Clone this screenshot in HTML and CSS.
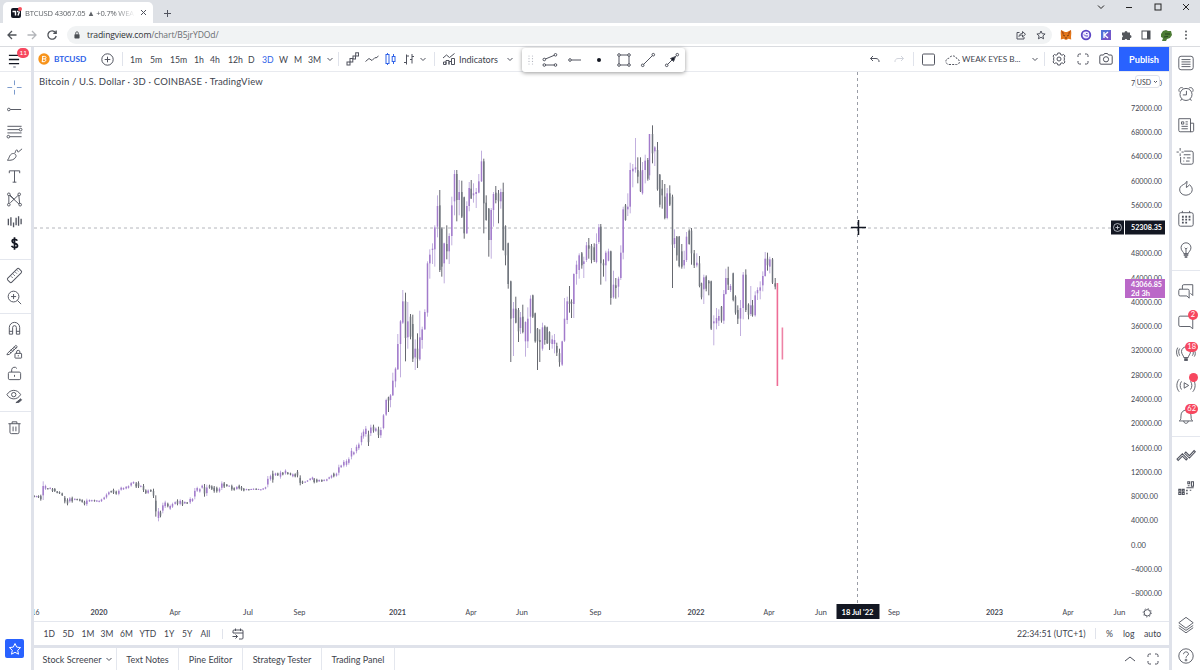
FILE: index.html
```
<!DOCTYPE html>
<html lang="en">
<head>
    <meta charset="UTF-8">
    <meta name="viewport" content="width=device-width, initial-scale=1.0">
    <title>BTCUSD 43067.05 ▲ +0.7% WEAK EYES B...</title>
    <link rel="stylesheet" href="styles.css">
</head>
<body>
    <!-- Browser window -->
    <div class="tab-strip">
        <div class="tab">
            <svg class="favicon" viewBox="0 0 11 11"><rect y="1" width="10" height="10" rx="2" fill="#131722"/><path d="M1.500 4.500h3v4M6 4.500h1.500M8.500 4.500L7 8.500" stroke="#fff" stroke-width="1.400" fill="none"/><circle cx="9" cy="2" r="2" fill="#f7525f"/></svg>
            <span class="tab-title">BTCUSD 43067.05 ▲ +0.7% WEA</span>
            <svg class="tab-close" viewBox="0 0 7 7"><path d="M1 1l5 5M6 1L1 6"/></svg>
        </div>
        <svg class="new-tab" viewBox="0 0 9 9"><path d="M4.500 1v7M1 4.500h7"/></svg>
        <div class="window-buttons">
            <svg viewBox="0 0 8 8"><path d="M1 2.500l3 3 3-3"/></svg>
            <svg viewBox="0 0 8 8"><path d="M1 4.500h6"/></svg>
            <svg viewBox="0 0 8 8"><rect x="1" y="1" width="6" height="6"/></svg>
            <svg viewBox="0 0 8 8"><path d="M1 1l6 6M7 1L1 7"/></svg>
        </div>
    </div>
    <div class="nav-bar">
        <svg class="nav-icon" viewBox="0 0 12 12"><path d="M10.500 6h-8M6 2L2 6l4 4"/></svg>
        <svg class="nav-icon muted" viewBox="0 0 12 12"><path d="M1.500 6h8M6 2l4 4-4 4"/></svg>
        <svg class="nav-icon" viewBox="0 0 12 12"><path d="M9.500 3.500A4.200 4.200 0 1 0 10.200 7M10.200 1.500V4.300H7.300"/></svg>
        <div class="address">
            <svg class="lock" viewBox="0 0 7 9"><rect y="3.500" x=".5" width="6" height="5" rx=".8" fill="#4b4f54"/><path d="M2 4V2.200a1.500 1.500 0 0 1 3 0V4" fill="none" stroke="#4b4f54"/></svg>
            <span>tradingview.com<span class="path">/chart/B5jrYDOd/</span></span>
            <svg class="share" viewBox="0 0 10 10"><path d="M3.500 2.500H1V9h7V7M3 6.500c.3-2 1.500-3 3.500-3V1.500L9.500 4.300 6.500 7V5C5 5 4 5.300 3 6.500z"/></svg>
            <svg class="bookmark" viewBox="0 0 10 10"><path d="M5 1l1.200 2.700 2.900.3-2.200 1.900.7 2.900L5 7.300 2.400 8.800l.7-2.900L.9 4l2.900-.3z"/></svg>
        </div>
        <div class="extensions">
            <svg viewBox="0 0 12 12"><path d="M1 1l4 2h2l4-2 .3 3L11 8l.2 2.500L8 9.800l-1 1H5l-1-1-3.200.7L1 8 .7 4z" fill="#e2761b"/><path d="M3 6l2 1M9 6L7 7M5 9h2" stroke="#763d16"/><path d="M1 1l3 3-1 2zM11 1L8 4l1 2z" fill="#a84a14"/></svg>
            <svg viewBox="0 0 12 12"><circle cx="6" cy="6" r="5.200" fill="#5b45c4"/><circle cx="6" cy="6" r="3.400" fill="#f0ecff"/><path d="M4 5.500l1.500 1.500h2.500M6 4.500h1.500" stroke="#5b45c4" fill="none"/></svg>
            <svg viewBox="0 0 12 12"><rect x="1" y="1" width="10" height="10" fill="#5271d8"/><path d="M1 11L11 1v10z" fill="#7357c9"/><path d="M4 3v6M8 3L4.500 6 8 9" stroke="#fff" stroke-width="1.300" fill="none"/></svg>
            <svg viewBox="0 0 12 12"><path d="M2 3.500h2.500a1.500 1.500 0 1 1 3 0H10V6a1.500 1.500 0 1 1 0 3v2H7.300a1.400 1.400 0 0 0-2.700 0H2V8.500a1.400 1.400 0 0 0 0-2.600z" fill="#54575c"/></svg>
            <svg viewBox="0 0 12 12"><rect x="2" y="2" width="8" height="8" fill="none" stroke="#4b4f54"/><path d="M7 2h3v8H7z" fill="#4b4f54"/></svg>
            <svg viewBox="0 0 12 12"><path d="M1 5l2-3 3-1 2 1 3 0 1 4-2 3-3 1-1 2H2l1-3-2-1z" fill="#4d7c35"/><path d="M5 5h5M4 8l4-.5" stroke="#27451f"/></svg>
            <svg viewBox="0 0 12 12"><g fill="#4b4f54"><circle cx="6" cy="2.500" r=".9"/><circle cx="6" cy="6" r=".9"/><circle cx="6" cy="9.500" r=".9"/></g></svg>
        </div>
    </div>

    <!-- Charting app -->
    <div class="app">
        <div class="drawing-bar">
            <div class="menu">
                <svg viewBox="0 0 14 14"><path d="M1.500 2.500h11M1.500 7h11M1.500 11.500h11" stroke-width="1.400"/></svg>
                <i class="menu-dot"></i>
                <span class="badge menu-badge">11</span>
            </div>
            <div class="tools">
                <svg class="cross-tool" viewBox="0 0 18 18"><path d="M9 1.500v5M9 11.500v5M1.500 9h5M11.500 9h5"/></svg>
                <svg viewBox="0 0 18 18"><circle cx="3" cy="9" r="1.400"/><path d="M4.500 9H16"/></svg>
                <svg viewBox="0 0 18 18"><path d="M1.500 3.500h15M1.500 7h12.500M1.500 10.500h15M4 14.500h12.500"/><circle cx="15.500" cy="7" r="1.400" fill="#fff"/><circle cx="2.500" cy="14.500" r="1.400"/></svg>
                <svg viewBox="0 0 18 18"><path d="M1.500 15c2-1 1.500-6 5.500-7 2.300-.5 4.500 1.500 3.300 3.800C8.700 14.800 5 15.500 1.500 15zM9.500 7.500c.5-2.500 2-4.500 2.500-3s0 2.500 1.500 1.500L17 3"/></svg>
                <svg viewBox="0 0 18 18"><path d="M3.500 5.500V3h11v2.500M9 3v12M7 15h4"/></svg>
                <svg viewBox="0 0 18 18"><path d="M3 14V4l11 10M4.500 12.500l9-8.500 1 10M4 4l5 5"/><circle cx="3" cy="14.500" r="1.400" fill="#fff"/><circle cx="3" cy="3.500" r="1.400" fill="#fff"/><circle cx="14" cy="3.500" r="1.400" fill="#fff"/><circle cx="15" cy="14.500" r="1.400" fill="#fff"/></svg>
                <svg viewBox="0 0 18 18"><path d="M2.500 6v7M5.200 4.500v9M8 10v5M10.700 5v8M13.300 3.500v10M16 6v6" stroke-width="1.400"/></svg>
                <svg viewBox="0 0 18 18"><path d="M12 6C11 4.300 6.500 4 6.500 6.700c0 2.600 5.700 1.800 5.700 4.600 0 2.500-5 2.400-6.400.2M9 2.500v13" stroke="#131722" stroke-width="1.800"/></svg>
            </div>
            <div class="tools">
                <svg viewBox="0 0 18 18"><rect x="0.500" y="6" width="17" height="6" rx="1.500" transform="rotate(-45 9 9)"/><path d="M5.500 10l1.500 1.500M7.800 7.800l1.500 1.500M10 5.500L11.500 7M12 3.700l1 1"/></svg>
                <svg viewBox="0 0 18 18"><circle cx="8" cy="8" r="5.700"/><path d="M5.300 8h5.400M8 5.300v5.400M12.200 12.200l3.800 3.800"/></svg>
            </div>
            <div class="tools">
                <svg viewBox="0 0 18 18"><path d="M3.500 15V8a5.500 5.500 0 0 1 11 0v7H11V8a2 2 0 0 0-4 0v7zM3.500 12H7M11 12h3.500"/></svg>
                <svg viewBox="0 0 18 18"><path d="M1.500 11l9-8.500L12 4l-8.500 8-2.500.5zM3.500 8.700l2 2M5.300 7l2 2M7 5.500l2 2M8.700 4l2 2"/><rect x="9.500" y="11" width="7" height="5" rx=".5" fill="#fff"/><path d="M11.200 11V9.500a1.700 1.700 0 0 1 3.500 0V11M13 12.800v1.400"/></svg>
                <svg viewBox="0 0 18 18"><rect x="2.500" y="7.500" width="13" height="8" rx="1.500"/><path d="M6 7.500V5a3 3 0 0 1 5.500-1.300M9 10.500v2"/></svg>
                <svg viewBox="0 0 18 18"><path d="M1 7c3.500-6 11-6 14.500 0-3.500 6-11 6-14.500 0z"/><circle cx="8.200" cy="7" r="2.300"/><path d="M10.500 15.500l5-4 1 1-2.500 2.500z" fill="#50535e"/></svg>
            </div>
            <div class="tools last">
                <svg viewBox="0 0 18 18"><path d="M2.500 5h13M6.500 5V3h5v2M4.200 5v9a1.500 1.500 0 0 0 1.500 1.500h6.600a1.500 1.500 0 0 0 1.500-1.500V5M7.500 8v5M10.500 8v5"/></svg>
            </div>
            <div class="favorite"><svg viewBox="0 0 14 14"><path d="M7 1.500l1.700 3.600 3.900.5-2.900 2.700.8 3.900L7 10.300l-3.500 1.900.8-3.900L1.400 5.600l3.900-.5z"/></svg></div>
        </div>

        <div class="center">
            <div class="top-bar">
                <div class="top-left">
                    <svg class="coin" viewBox="0 0 12 12"><circle cx="6" cy="6" r="5.700" fill="#f7931a"/><path d="M4.800 3l-.6 6M4.300 3.400h2.500c1.800 0 1.500 2.500 0 2.500H4.500M6.500 5.900c2.200 0 1.500 2.800-.3 2.800H4" stroke="#fff" fill="none"/></svg>
                    <span class="symbol">BTCUSD</span>
                    <span class="sep"><svg class="i13" viewBox="0 0 13 13"><circle cx="6.500" cy="6.500" r="5.700"/><path d="M6.500 3.700v5.600M3.700 6.500h5.600"/></svg></span>
                    <span class="first-interval">1m</span>
                    <span>5m</span>
                    <span>15m</span>
                    <span>1h</span>
                    <span>4h</span>
                    <span>12h</span>
                    <span>D</span>
                    <span class="active">3D</span>
                    <span>W</span>
                    <span>M</span>
                    <span>3M</span>
                    <span class="sep"><svg class="chev" viewBox="0 0 8 8"><path d="M1.500 3L4 5.500 6.500 3"/></svg></span>
                    <span class="icon-lead"><svg class="i14" viewBox="0 0 14 14"><rect x="1" y="10" width="3" height="3"/><rect x="4" y="6.500" width="2.800" height="3.500"/><rect x="7" y="4" width="2.500" height="3"/><rect x="9.700" y=".8" width="2.800" height="3.200"/></svg></span>
                    <svg class="i14" viewBox="0 0 14 14"><path d="M.5 9.500L4 6.500l3 2 3-3 1 .5L13.500 4"/></svg>
                    <svg class="i14 active" viewBox="0 0 14 14"><path d="M3.500 1v12M9.500 2v2.500M9.500 9.500V12"/><rect x="2" y="2.500" width="3" height="9" fill="#fff"/><rect x="8.200" y="4.500" width="2.800" height="5"/></svg>
                    <svg class="i14" viewBox="0 0 14 14"><path d="M3.500 2.500v10M1 10.500h2.500M3.500 4H6M9 2v9.500M7 7.500h2M9 4.500h2"/></svg>
                    <span class="sep"><svg class="chev" viewBox="0 0 8 8"><path d="M1.500 3L4 5.500 6.500 3"/></svg></span>
                    <span class="icon-lead"><svg class="i14" viewBox="0 0 14 14"><path d="M1.500 12.500V10H4v2.500zM4 12.500v-4h3v4M7 12.500v-3h2.500v3M9.500 12.500v-6h3v6zM1 6l3.500-3 3 2.500L12.500 1.500"/></svg></span>
                    <span class="indicators">Indicators</span>
                    <svg class="chev" viewBox="0 0 8 8"><path d="M1.500 3L4 5.500 6.500 3"/></svg>
                </div>
                <div class="top-right">
                    <svg class="i12" viewBox="0 0 12 12"><path d="M4 3L1.500 5.500 4 8M1.500 5.500h5.500a3 3 0 0 1 3 3.500"/></svg>
                    <span class="sep"><svg class="i12 faded" viewBox="0 0 12 12"><path d="M8 3l2.500 2.500L8 8M10.500 5.500H5A3 3 0 0 0 2 9"/></svg></span>
                    <span class="icon-lead"><svg class="i15" viewBox="0 0 15 15"><rect x="1.500" y="2" width="12" height="11" rx="1.200"/></svg></span>
                    <svg class="i15" viewBox="0 0 15 15"><path d="M4 12.500h7.500a2.700 2.700 0 0 0 .5-5.400A4.300 4.300 0 0 0 4 6.300a3.100 3.100 0 0 0 0 6.200z" stroke-dasharray="2 1.200"/></svg>
                    <span class="layout-name">WEAK EYES B...</span>
                    <span class="sep"><svg class="chev" viewBox="0 0 8 8"><path d="M1.500 3L4 5.500 6.500 3"/></svg></span>
                    <span class="icon-lead"><svg class="i14" viewBox="0 0 14 14"><path d="M5.800 1h2.400l.4 1.600 1.500.6 1.400-.8L13 4l-.8 1.400.2 1.600-.2 1.600.8 1.400-1.500 1.600-1.400-.8-1.500.6-.4 1.600H5.800l-.4-1.600-1.500-.6-1.400.8L1 10l.8-1.400L1.600 7l.2-1.600L1 4l1.500-1.600 1.400.8 1.500-.6z"/><circle cx="7" cy="7" r="2"/></svg></span>
                    <svg class="i12" viewBox="0 0 12 12"><path d="M1 4V2.500A1.500 1.500 0 0 1 2.500 1H4M8 1h1.500A1.500 1.500 0 0 1 11 2.500V4M11 8v1.500A1.500 1.500 0 0 1 9.500 11H8M4 11H2.500A1.500 1.500 0 0 1 1 9.500V8"/></svg>
                    <svg class="i14 camera" viewBox="0 0 14 14"><path d="M2 3h2.500L5.500 1.500h3L9.500 3H12a1.200 1.200 0 0 1 1.200 1.200V11A1.200 1.200 0 0 1 12 12.200H2A1.200 1.200 0 0 1 .8 11V4.200A1.200 1.200 0 0 1 2 3z"/><circle cx="7" cy="7.300" r="2.600"/></svg>
                    <button class="publish">Publish</button>
                </div>
            </div>

            <div class="chart-area">
                <svg id="chart" class="chart" viewBox="34 72 1135 549"></svg>
                <div class="legend">Bitcoin / U.S. Dollar · 3D · COINBASE · TradingView</div>
                <div class="currency">USD <svg viewBox="0 0 5 4"><path d="M1 1l1.500 1.500L4 1"/></svg></div>
                <div class="floating-bar">
                    <svg class="grip" viewBox="0 0 6 12"><g fill="#b2b5be"><circle cx="1" cy="2" r=".6"/><circle cx="4.500" cy="2" r=".6"/><circle cx="1" cy="4.700" r=".6"/><circle cx="4.500" cy="4.700" r=".6"/><circle cx="1" cy="7.400" r=".6"/><circle cx="4.500" cy="7.400" r=".6"/><circle cx="1" cy="10" r=".6"/><circle cx="4.500" cy="10" r=".6"/></g></svg>
                    <svg viewBox="0 0 16 16"><path d="M3 7.200l9.500-4M3.500 13h9"/><circle cx="2.300" cy="7.500" r="1.300"/><circle cx="13.500" cy="2.800" r="1.300"/><circle cx="2.300" cy="13" r="1.300"/><circle cx="13.500" cy="13" r="1.300"/></svg>
                    <svg viewBox="0 0 16 16"><circle cx="3" cy="8" r="1.300"/><path d="M4.300 8H14"/></svg>
                    <svg viewBox="0 0 16 16"><circle cx="8" cy="8" r="2" fill="#131722" stroke="none"/></svg>
                    <svg viewBox="0 0 16 16"><rect x="3" y="3" width="10" height="10"/><g fill="#fff"><circle cx="3" cy="3" r="1.300"/><circle cx="13" cy="3" r="1.300"/><circle cx="3" cy="13" r="1.300"/><circle cx="13" cy="13" r="1.300"/></g></svg>
                    <svg viewBox="0 0 16 16"><path d="M3.500 12.500l9-9"/><circle cx="2.700" cy="13.300" r="1.300"/><circle cx="13.300" cy="2.700" r="1.300"/></svg>
                    <svg viewBox="0 0 16 16"><path d="M3.500 12.500l9-9"/><circle cx="2.700" cy="13.300" r="1.300"/><circle cx="13.300" cy="2.700" r="1.300"/><path d="M11.500 4.500L6.500 6.500l3 3z" fill="#131722"/></svg>
                </div>
            </div>

            <div class="range-bar">
                <div class="ranges">
                    <span>1D</span><span>5D</span><span>1M</span><span>3M</span><span>6M</span><span>YTD</span><span>1Y</span><span>5Y</span><span>All</span>
                </div>
                <svg class="goto" viewBox="0 0 12 12"><path d="M1 5V3a1 1 0 0 1 1-1h8a1 1 0 0 1 1 1v7a1 1 0 0 1-1 1H7M1 5h10M3.500 .5V3M8.500 .5V3M.5 8.500h5M3.500 6.500l2 2-2 2"/></svg>
                <div class="scale-opts">
                    <span class="clock">22:34:51 (UTC+1)</span>
                    <span class="pct">%</span>
                    <span>log</span>
                    <span>auto</span>
                </div>
            </div>

            <div class="bottom-tabs">
                <span class="bt screener">Stock Screener <svg class="chev" viewBox="0 0 8 8"><path d="M1.500 3L4 5.500 6.500 3"/></svg></span>
                <span class="bt notes">Text Notes</span>
                <span class="bt pine">Pine Editor</span>
                <span class="bt tester">Strategy Tester</span>
                <span class="bt trading">Trading Panel</span>
                <span class="panel-buttons">
                    <svg viewBox="0 0 12 12"><path d="M1 8l5-4 5 4"/></svg>
                    <svg viewBox="0 0 12 12"><path d="M1 4V2.500A1.500 1.500 0 0 1 2.500 1H4M8 1h1.500A1.500 1.500 0 0 1 11 2.500V4M11 8v1.500A1.500 1.500 0 0 1 9.500 11H8M4 11H2.500A1.500 1.500 0 0 1 1 9.500V8"/></svg>
                </span>
            </div>
        </div>

        <div class="widget-bar">
            <div class="widgets">
                <div><svg viewBox="0 0 20 20"><rect x="2" y="2.500" width="16" height="15" rx="2.500"/><path d="M5 6.200h10M5 8.800h10M5 11.400h10M5 14h10"/></svg></div>
                <div><svg viewBox="0 0 20 20"><circle cx="10" cy="10.500" r="6.700"/><path d="M10.500 6.500v4.500H6.500M2.500 7.500C1 4 4.500 1.500 7 3.700M17.500 7.500C19 4 15.500 1.500 13 3.700M5.200 15.500l-1.200 2M14.800 15.500l1.200 2"/></svg></div>
                <div><svg viewBox="0 0 20 20"><path d="M2 3h13v14.500H3.500A1.500 1.500 0 0 1 2 16zM15 8h3.500v8a1.500 1.500 0 0 1-1.500 1.500h-2.500M5 6.500h2.500V9H5zM9.500 6.500H12M9.500 9H12M5 11.500h7M5 14.200h7"/></svg></div>
                <div><svg viewBox="0 0 20 20"><path d="M8 3.500h8A2 2 0 0 1 18 5.500V16a2 2 0 0 1-2 2H6a2 2 0 0 1-2-2v-6M7.500 7.500H15M7 11h2M11 11h4M7 14.500h1M10 14.500h4M3.500 0v3M3.500 6v3M-.5 4.500H2M5 4.500h2.500"/></svg></div>
                <div><svg viewBox="0 0 20 20"><path d="M11 2.500c.5 3-1 4-.5 7L14 6.500c5 3.500 3.500 11-4 11.500C3 18 1 10.500 5 7.500 8 5.500 10 5 11 2.500z"/></svg></div>
                <div><svg viewBox="0 0 20 20"><rect x="2" y="3" width="16" height="15" rx="2"/><path d="M6 1v2M14 1v2"/><path d="M5.500 7.500h9.500M5.500 10.800h9.500M5.500 14h6" stroke-width="2" stroke-dasharray="2 1.700"/></svg></div>
                <div><svg viewBox="0 0 20 20"><path d="M7.500 14c0-2-3-3-3-6.500a5.500 5.500 0 0 1 11 0C15.500 11 12.500 12 12.500 14zM10 14V9M8.500 7.500L10 9l1.500-1.500"/><path d="M7.500 15.500h5M8.500 17.800h3" stroke-width="1.800"/></svg></div>
            </div>
            <div class="widgets">
                <div><svg viewBox="0 0 20 20"><path d="M6 8V4.500A1.500 1.500 0 0 1 7.500 3H17.500v12l-2.500-2.500M3 8h9a1.500 1.500 0 0 1 1.500 1.500V18L11 15.500H3.500A1.500 1.500 0 0 1 2 14V9.500A1.500 1.500 0 0 1 3.500 8z"/></svg></div>
                <div><svg viewBox="0 0 20 20"><path d="M3.500 3.500H16A1.500 1.500 0 0 1 17.500 5v12.500l-3-2.500h-11A1.500 1.500 0 0 1 2 13.500V5a1.500 1.500 0 0 1 1.500-1.500z"/></svg><span class="badge">2</span></div>
                <div><svg viewBox="0 0 20 20"><path d="M7.500 15c0-2-2.500-3.500-2.500-6.700a5 5 0 0 1 10 0C15 11.500 12.500 13 12.500 15zM3 5c-1.500 2-1.500 5 0 8M.8 4c-1.700 3-1.700 7 0 10M17 13c1.500-2 1.500-4 0-7M19.200 14c1.500-2 1.500-5 0-7"/><path d="M8 17.300h4" stroke-width="3"/></svg><span class="badge">18</span></div>
                <div><svg viewBox="0 0 20 20"><path d="M8 7.500l5 3-5 3zM5 6c-2 2.500-2 6.500 0 9M2.500 3.500c-3.500 4-3.500 10 0 14M15 6c2 2.500 2 6.500 0 9M17.500 3.500c3.500 4 3.500 10 0 14"/></svg><span class="badge dot"></span></div>
                <div><svg viewBox="0 0 20 20"><path d="M2.500 15.500c2.500-1.500 1.500-3.500 2-6.500a5.500 5.500 0 0 1 11 0c.5 3-.5 5 2 6.500zM7.500 15.500c0 3.500 5 3.500 5 0"/></svg><span class="badge">62</span></div>
            </div>
            <div class="widgets open">
                <div><svg viewBox="0 0 20 20"><path d="M0 13.500l6-6 5.500 5.500-1.300 1.300L6 10.200 1.300 15zM8.500 7l1.300-1.300 4 4L19 4l1.300 1.300-6.500 7z" stroke-width="1.200"/></svg></div>
                <div><svg viewBox="0 0 20 20"><path d="M12 3h2v2.300h-2zM16 3h2.300v5H16zM12 7.500h2M2 11.500h2.300v2H2zM2 15h2.300v2.300H2zM6 11.500h2v2H6zM6 15h2v2.300H6zM10.500 9.800h8" stroke-width="1.200"/><path d="M11 12v6M15 12v1" stroke-width="1.700" stroke-dasharray="1.700 1.500"/></svg></div>
            </div>
            <div class="widgets bottom">
                <div><svg viewBox="0 0 20 20"><path d="M10 1.500L18 7.500 10 13.500 2 7.500zM2 10.500L10 16l8-5.500M2 13L10 18.700l8-5.700"/></svg></div>
                <div><svg viewBox="0 0 20 20"><circle cx="10" cy="10" r="8"/><path d="M7.300 8c0-3.500 5.400-3.300 5.400-.3 0 2-2.700 2-2.700 4.300"/><circle cx="10" cy="14.500" r="1"/></svg></div>
            </div>
        </div>
    </div>

    <script src="chart.js"></script>
</body>
</html>
```
FILE: styles.css
```
* { box-sizing: border-box; }
body {
    margin: 0;
    width: 1200px;
    height: 670px;
    display: flex;
    flex-direction: column;
    overflow: hidden;
    font-family: Lato, "Open Sans", sans-serif;
    font-size: 8.7px;
    color: #40434d;
    background: #fff;
}
svg { display: block; flex: none; fill: none; stroke: #50535e; }

/* browser */
.tab-strip {
    height: 23px;
    flex: none;
    display: flex;
    align-items: center;
    padding-left: 3px;
    background: #dee1e6;
}
.tab {
    width: 150px;
    height: 21px;
    margin-top: 2px;
    padding: 0 6px 0 8px;
    display: flex;
    align-items: center;
    background: #fff;
    border-radius: 5px 5px 0 0;
}
.favicon { width: 11px; height: 11px; stroke: none; }
.tab-title {
    flex: 1;
    margin: 0 5px 0 3px;
    white-space: nowrap;
    font-family: "Open Sans", sans-serif;
    font-size: 7.6px;
    letter-spacing: -0.2px;
    color: #5f6368;
    -webkit-mask-image: linear-gradient(90deg, #000 82%, transparent);
}
.tab-close { width: 7px; height: 7px; }
.new-tab { width: 9px; height: 9px; margin: 3px 0 0 10px; }
.window-buttons { margin: -10px 10px 0 auto; display: flex; gap: 20.5px; }
.window-buttons svg { width: 8px; height: 8px; stroke: #222; }
.nav-bar {
    height: 24px;
    flex: none;
    display: flex;
    align-items: center;
    padding-left: 6px;
    border-bottom: 1px solid #dadce0;
}
.nav-icon { width: 12px; height: 12px; margin-right: 8px; stroke: #50545a; stroke-width: 1.3; }
.nav-icon.muted { stroke: #b4b6ba; }
.address {
    width: 985px;
    height: 18px;
    margin-left: 1px;
    padding: 0 6px 0 7px;
    display: flex;
    align-items: center;
    border-radius: 9px;
    background: #f1f3f4;
    color: #303134;
    font-family: "Open Sans", sans-serif;
    font-size: 8.6px;
    letter-spacing: -0.13px;
}
.address .path { color: #6a6e73; }
.lock { width: 6px; height: 8px; margin-right: 7px; stroke: none; }
.share { width: 10px; height: 10px; margin-left: auto; }
.bookmark { width: 10px; height: 10px; margin-left: 10px; }
.extensions { display: flex; gap: 8px; margin-left: 8px; }
.extensions svg { width: 12px; height: 12px; stroke: none; }

/* app frame */
.app {
    flex: 1;
    display: grid;
    grid-template-columns: 31px 1135px 28px;
    column-gap: 3px;
    background: #dfe2ea;
    min-height: 0;
}
.drawing-bar, .widget-bar { background: #fff; display: flex; flex-direction: column; }
.menu {
    height: 25px;
    display: flex;
    padding-left: 7px;
    align-items: center;
    position: relative;
    border-bottom: 1px solid #e8eaef;
}
.menu svg { width: 14px; height: 13px; stroke: #131722; }
.menu-dot { position: absolute; left: 13px; top: 19px; width: 3px; height: 2px; border-radius: 1px; background: #b2b5be; }
.badge {
    position: absolute;
    top: 4px;
    right: 2px;
    min-width: 10px;
    height: 10px;
    padding: 0 2px;
    border-radius: 5px;
    background: #f7475f;
    color: #fff;
    font-size: 7.500px;
    line-height: 10px;
    text-align: center;
}
.menu-badge { top: 1px; font-size: 6.5px; }
.tools {
    display: flex;
    flex-direction: column;
    align-items: center;
    padding: 4px 2.5px 4px 0;
    border-bottom: 1px solid #e4e7ee;
}
.tools svg { width: 17px; height: 17px; margin: 2.7px 0; overflow: visible; }
.tools .cross-tool { stroke: #7495c9; }
.tools.last { border-bottom: 0; }
.favorite {
    width: 19px;
    height: 19px;
    margin: auto auto 12px 5px;
    padding: 2.5px;
    border-radius: 2px;
    background: #2962ff;
}
.favorite svg { width: 14px; height: 14px; stroke: #fff; }

/* top toolbar */
.center { display: flex; flex-direction: column; background: #dfe2ea; min-width: 0; }
.top-bar {
    height: 25px;
    flex: none;
    display: flex;
    justify-content: space-between;
    background: #fff;
    border-bottom: 1px solid #e8eaef;
    white-space: nowrap;
}
.top-left, .top-right { display: grid; align-items: center; height: 24px; }
.top-left {
    margin-left: 4px;
    grid-template-columns: 16px 47px 22px 27px 20px 24px 16px 18px 20px 14px 17px 15px 14px 18px 13px 26px 19px 19px 16px 16px 24px 47px 14px;
}
.top-right { grid-template-columns: 24px 21px 31px 17px 69px 14px 32px 23px 19px 50px; }
.coin { width: 12px; height: 12px; stroke: none; }
.symbol { color: #2f62e8; font-weight: 700; font-size: 8.3px; letter-spacing: -0.1px; }
.sep { height: 14px; display: flex; align-items: center; border-right: 1px solid #e0e3eb; }
.first-interval { padding-left: 7px; }
.top-bar .active { color: #2f62e8; stroke: #2f62e8; }
.icon-lead { padding-left: 7px; }
.i12 { width: 12px; height: 12px; }
.i13 { width: 13px; height: 13px; }
.i14 { width: 14px; height: 14px; }
.i15 { width: 15px; height: 15px; }
.camera { margin-left: -1px; }
.chev { width: 8px; height: 8px; }
.faded { stroke: #d1d4dc; }
.indicators { font-size: 9px; }
.layout-name { font-size: 8.2px; }
.publish {
    height: 24px;
    padding: 0;
    border: 0;
    background: #2962ff;
    color: #fff;
    font: 700 9.2px Lato, sans-serif;
}

/* chart */
.chart-area { position: relative; height: 549px; background: #fff; flex: none; }
.chart { width: 1135px; height: 549px; stroke: none; }
.chart text { font-family: Lato, sans-serif; font-size: 7.8px; fill: #434651; }
.chart .bold { font-weight: 700; }
.chart .light { fill: #fff; font-weight: 700; }
.chart .cursor-line { stroke: #9a9da6; stroke-dasharray: 3 3; }
.chart .cursor-line.level { stroke: #b4b6bc; }
.legend { position: absolute; left: 5px; top: 4px; font-size: 9.5px; letter-spacing: 0.18px; white-space: nowrap; }
.currency {
    position: absolute;
    left: 1101px;
    top: 3px;
    width: 25px;
    height: 13px;
    display: flex;
    align-items: center;
    justify-content: center;
    gap: 2px;
    border: 1px solid #e0e3eb;
    border-radius: 3px;
    background: #fff;
    font-size: 7px;
}
.currency svg { width: 5px; height: 4px; }
.floating-bar {
    position: absolute;
    left: 488px;
    top: -24px;
    width: 163px;
    height: 24px;
    display: flex;
    align-items: center;
    gap: 8.4px;
    padding-left: 6px;
    border-radius: 3px;
    background: #fff;
    box-shadow: 0 1px 4px rgba(0,0,0,0.4);
}
.floating-bar svg { width: 16px; height: 16px; }
.floating-bar .grip { width: 6px; height: 12px; stroke: none; }

/* date ranges and panels */
.range-bar {
    height: 24px;
    flex: none;
    display: flex;
    align-items: center;
    background: #fff;
    border-top: 1px solid #e4e7ee;
    white-space: nowrap;
    font-size: 8.5px;
}
.ranges {
    display: grid;
    grid-template-columns: 19px 19px 19px 19.5px 19.5px 24.5px 18px 18.5px 21px;
    margin-left: 9.5px;
    border-right: 1px solid #e0e3eb;
}
.goto { width: 12px; height: 12px; margin-left: 9px; }
.scale-opts {
    margin-left: auto;
    display: grid;
    grid-template-columns: 79px 27px 21px 25px;
    align-items: center;
    font-size: 8.7px;
}
.clock { border-right: 1px solid #e0e3eb; }
.pct { padding-left: 10px; }
.bottom-tabs {
    flex: 1;
    margin-top: 3px;
    display: flex;
    background: #fff;
    font-size: 9px;
    white-space: nowrap;
}
.bt {
    display: flex;
    align-items: center;
    justify-content: center;
    border-right: 1px solid #e4e7ee;
}
.screener { width: 83px; gap: 4px; padding-left: 6px; }
.notes { width: 62px; }
.pine { width: 64px; }
.tester { width: 79px; }
.trading { width: 73px; }
.panel-buttons { margin-left: auto; margin-right: 10px; display: flex; align-items: center; gap: 11px; }
.panel-buttons svg { width: 12px; height: 12px; }

/* right widgets */
.widgets { padding: 4px 0; border-bottom: 1px solid #e4e7ee; }
.widgets:first-child { padding-top: 0; }
.widgets div { height: 31.3px; padding-right: 1px; display: flex; align-items: center; justify-content: center; position: relative; }
.widgets svg { width: 18px; height: 18px; overflow: visible; }
.widgets .dot { min-width: 9px; height: 9px; padding: 0; }
.widgets.open, .widgets.bottom { border-bottom: 0; }
.widgets.bottom { margin-top: auto; margin-bottom: -6px; }
```
FILE: chart.js
```
// Bars are [x, high, low, bodyTop, bodyBottom, dir] in thirds of a pixel,
// measured from the section origin. Body defaults to the middle of the range.
const U = 1, D = 0;
const sections = [
    { x: 90, y: 1260, bars: [
        [12,226,232,D],[19,227,232,U],[25,226,234,D],[32,224,242,D],[39,184,240,U],[46,194,210,U],[53,204,208,D],[60,202,208,U],[67,204,216,D],[74,204,216,D],
        [81,213,220,D],[88,214,222,D],[96,218,228,D],[104,228,250,D],[112,235,256,D],[119,231,248,U],[126,230,248,D],[134,235,241,U],[141,236,241,D],[149,236,244,D],
        [156,238,248,D],[163,242,256,D],[170,236,258,U],[178,238,246,U],[185,239,245,U],[193,239,245,D],[200,240,246,U],[207,241,247,U],[214,236,246,U],[222,230,240,U],
        [229,220,236,U],[236,214,226,U],[243,212,218,D],[250,206,222,D],[258,212,224,D],[266,208,226,U],[273,200,212,U],[280,202,210,U],[288,198,208,U],[295,196,206,U],
        [303,186,200,U],[310,184,192,U],[318,186,204,D],[325,184,204,D],[332,196,202,U],[340,192,216,D],[347,208,222,D],[354,208,222,U],[362,208,216,D],[370,206,234,D],
        [377,226,290,D],[385,264,304,U],[391,272,292,D],[398,248,280,U],[405,242,264,U],[413,248,262,D],[420,254,270,U],[427,248,264,U],[435,244,254,U],[442,238,256,D],
        [450,238,256,U],[457,240,258,D],[464,244,252,U],[471,246,252,D],[480,232,252,U],[487,234,246,U],[494,204,238,U],[501,200,216,U],[509,204,218,U],[516,194,206,U],
        [523,192,230,D],[530,194,228,U],[538,194,206,D],[545,196,210,D],[552,198,218,D],[560,200,218,D],[568,202,218,U],[575,184,210,U],[582,186,204,D],[590,192,200,D],
        [597,196,200,U],[605,194,212,D],[612,202,212,D],[620,198,210,U],[627,194,208,D],[634,198,212,D],[641,204,214,D],[649,206,211,U],[656,207,211,D],[663,206,210,U],
        [670,205,210,U],[678,205,210,D],[685,206,210,U],[692,207,211,U],[699,204,210,U],[706,200,208,U],[713,168,202,U],[721,164,182,U],[728,152,188,D],[736,158,168,U],
        [743,158,168,D],[751,152,176,U],[758,156,166,D],[766,148,164,U],[773,156,164,D],[781,158,166,D],[788,160,172,U],[795,160,172,D],[802,150,172,D],[810,166,196,D],
        [817,182,192,D],[825,184,188,U],[832,180,186,U],[840,174,182,U],[847,170,180,U],[852,174,190,D],[860,176,188,D],[867,178,186,U],[875,178,186,D],[882,178,184,U],
        [890,176,184,U],[897,170,178,U],[904,164,176,U],[911,158,172,D],[919,158,170,U],[926,134,166,U],[933,134,144,U],[941,120,142,U],[949,118,140,U],[956,112,134,U],
        [964,84,118,U],[971,94,106,U],[979,74,100,U],[986,68,90,U],[994,38,76,U],[1000,28,56,U],[1007,18,50,U],[1015,32,78,D],[1022,14,48,U],[1030,14,38,D],
        [1037,22,36,U],[1045,20,54,D],[1052,22,54,U]
    ] },
    { x: 1020, y: 420, bars: [
        [130,822,868,826,864,U],[138,776,828,780,824,U],[145,770,816,772,782,D],[151,762,802,766,780,U],[158,698,768,722,766,U],[166,682,742,686,724,U],
        [173,582,690,612,688,U],[181,540,712,544,612,U],[188,450,552,484,548,U],[196,458,664,484,594,D],[203,486,626,544,592,U],[211,522,598,530,590,D],
        [218,524,666,552,656,D],[225,598,690,626,652,U],[232,580,684,626,656,D],[239,512,662,592,658,U],[246,560,626,568,600,U],[254,508,570,516,568,U],
        [262,364,530,370,518,U],[269,328,416,344,370,U],[277,310,372,326,330,U],[284,256,380,262,328,U],[292,166,292,198,260,U],[299,150,396,196,390,D],
        [305,262,410,266,380,D],[312,308,430,310,370,U],[320,256,358,312,334,D],[327,280,372,288,334,U],[335,170,316,196,288,U],[343,90,226,102,184,U],
        [350,90,244,102,180,D],[357,120,226,156,180,U],[365,122,234,156,230,D],[372,170,296,172,280,D],[380,184,282,198,280,U],[387,126,214,144,198,U],
        [393,120,176,146,176,D],[400,130,188,160,166,U],[408,144,204,156,162,U],[416,102,160,124,158,U],[424,32,126,64,124,U],[431,56,280,64,190,D],
        [438,166,242,188,240,D],[446,204,350,206,300,D],[453,204,356,210,300,U],[460,156,260,162,210,U],[467,138,190,158,180,D],[475,150,250,160,184,D],
        [482,146,206,156,184,U],[489,128,332,156,330,D],[496,256,376,258,346,D],[504,308,446,310,432,D],[512,422,666,424,536,D],[520,486,648,506,534,U],
        [527,470,550,506,548,D],[535,504,606,510,574,D],[541,516,582,532,564,U],[548,494,580,530,576,D],[556,544,650,546,604,U],[563,502,624,536,604,U],
        [571,466,580,476,530,U],[578,464,534,466,530,D],[585,518,608,520,604,D],[592,564,690,566,604,D],[599,568,666,600,606,D],[607,548,632,562,626,U],
        [614,556,614,560,600,D],[621,560,612,562,610,D],[628,574,630,576,610,D],[636,586,626,598,612,U],[643,582,640,600,612,U],[650,608,648,D],
        [658,626,680,D],[666,602,678,604,674,U],[673,474,606,536,602,U],[681,470,552,484,540,U],[688,438,518,484,492,D],[694,478,534,486,490,D],
        [701,400,534,402,492,U],[709,362,434,374,402,U],[717,340,416,346,390,U]
    ] },
    { x: 1620, y: 330, bars: [
        [125,426,476,430,466,D],[131,440,504,454,462,U],[139,396,456,406,450,U],[146,384,446,406,416,D],[154,402,460,408,450,D],[162,400,456,412,450,D],
        [169,370,460,402,456,U],[176,342,402,352,396,U],[182,342,524,350,460,D],[190,448,500,460,466,D],[197,422,514,428,466,U],[205,416,454,424,452,U],
        [212,422,584,424,564,D],[220,482,566,524,562,U],[227,504,566,526,534,D],[235,500,562,506,530,U],[242,406,510,428,504,U],[249,290,448,298,428,U],
        [256,282,332,286,330,D],[263,250,318,290,298,U],[270,158,310,180,290,U],[278,162,232,176,184,U],[286,84,188,172,178,U],[293,142,220,180,200,D],
        [301,142,246,184,244,D],[307,156,254,180,250,U],[315,134,220,152,180,U],[323,144,212,150,206,D],[328,72,210,72,196,U],[337,46,160,72,130,D],
        [344,108,168,112,124,U],[352,96,242,120,238,D],[359,192,292,194,284,D],[366,210,296,236,256,D],[374,222,328,260,324,D],[381,234,328,250,324,U],
        [389,226,288,250,284,D],[397,254,534,260,404,D],[403,358,414,384,402,U],[410,378,452,380,436,D],[417,378,472,380,468,D],[425,402,476,424,470,D],
        [432,422,476,450,466,U],[439,366,456,380,450,U],[447,358,404,362,402,D],[454,354,464,362,430,D],[462,420,474,430,466,D],[470,430,472,458,466,U],
        [478,438,532,460,528,D],[484,518,568,520,562,D],[491,494,582,502,538,U],[498,496,544,500,536,D],[506,510,556,514,520,D],[513,512,660,514,656,D],
        [521,616,706,634,640,U],[529,594,658,624,640,U],[536,598,648,618,632,U],[544,588,638,590,632,D],[551,540,642,552,632,U],[557,476,554,504,552,U],
        [564,470,540,504,524,D],[571,522,546,U],[579,488,574,490,570,D],[586,556,614,560,608,D],[593,586,642,600,626,D],[601,570,678,594,626,U],
        [609,486,628,494,594,U],[617,478,606,494,600,D],[625,580,628,584,614,D],[632,528,618,586,612,U],[637,570,620,586,616,D],[645,544,620,556,616,U],
        [652,532,570,540,550,U],[660,514,568,532,542,U],[668,484,544,498,526,U],[675,426,500,446,498,U],[682,428,482,446,466,D],[689,440,490,448,470,U],
        [697,444,522,448,518,D],[705,504,538,520,530,D]
    ] }
];

const parts = [];
const rect = (x, y, w, h, fill) => parts.push(`<rect x="${x.toFixed(2)}" y="${y.toFixed(2)}" width="${w}" height="${h.toFixed(2)}" fill="${fill}"/>`);
const text = (x, y, str, len, cls = '', anchor = 'start') =>
    parts.push(`<text x="${x}" y="${y}" class="${cls}" text-anchor="${anchor}" textLength="${len}" lengthAdjust="spacingAndGlyphs">${str}</text>`);

// crosshair lines
parts.push('<path class="cursor-line level" d="M34 228H1111"/><path class="cursor-line" d="M857.5 72V603"/>');

for (const s of sections) {
    for (const bar of s.bars) {
        const dir = bar[bar.length - 1];
        const [x, high, low] = bar;
        const quarter = (low - high) / 4;
        const top = bar.length > 4 ? bar[3] : high + quarter;
        const bottom = bar.length > 4 ? bar[4] : low - quarter;
        const cx = (s.x + x + 0.5) / 3;
        rect(cx - 0.4, (s.y + high) / 3, 0.8, (low - high) / 3, dir ? '#b29bd6' : '#3f424b');
        rect(cx - 0.75, (s.y + top) / 3, 1.5, Math.max(1, (bottom - top) / 3), dir ? '#a27bcb' : '#70757e');
    }
}

// projected bars
rect(776.6, 283, 1.6, 103, '#ee6d96');
rect(781.6, 327.5, 1.6, 32, '#ee83a6');

// price scale
for (let i = 0; i <= 21; i++) {
    const price = 76000 - i * 4000;
    if (price === 52000) continue;
    const label = (price < 0 ? '−' : '') + Math.abs(price) + '.00';
    const len = price < 0 ? 31 : price === 0 ? 15 : price < 10000 ? 27 : 31;
    text(1131, (86.4 + i * 24.27).toFixed(1), label, len);
}
rect(1111, 220.5, 13, 14, '#131722');
rect(1125, 220.5, 40, 14, '#131722');
parts.push('<circle cx="1117.5" cy="227.5" r="4" fill="none" stroke="#d1d4dc" stroke-width=".8"/><path d="M1115.5 227.5h4M1117.5 225.5v4" stroke="#d1d4dc" stroke-width=".8"/>');
text(1131, 230.3, '52308.35', 31, 'light');
rect(1125, 279, 40, 19, '#ba68c8');
text(1131, 287.3, '43066.85', 31, 'light');
text(1131, 296.2, '2d 3h', 19, 'light');

// time scale
const dates = [
    [35.5, '16', 8], [99, '2020', 17, 'bold'], [175, 'Apr', 11], [248, 'Jul', 10], [299.5, 'Sep', 12], [397.5, '2021', 17, 'bold'],
    [471, 'Apr', 11], [522, 'Jun', 12], [595.5, 'Sep', 12], [696, '2022', 17, 'bold'], [769, 'Apr', 11], [821, 'Jun', 12],
    [894, 'Sep', 12], [994.5, '2023', 17, 'bold'], [1068, 'Apr', 11], [1119.5, 'Jun', 12]
];
for (const [x, label, len, cls] of dates) text(x, 615, label, len, cls, 'middle');
rect(836.5, 604, 43, 15, '#131722');
text(857.5, 615, "18 Jul '22", 32, 'light', 'middle');
parts.push('<g fill="none" stroke="#50535e"><circle cx="1147.3" cy="612.8" r="3.2"/><circle cx="1147.3" cy="612.8" r="4.2" stroke-width="1" stroke-dasharray="1 2.3"/></g>');

// mouse pointer
parts.push('<path d="M851 227.5h15M858.5 220v15" stroke="#131722" stroke-width="1.5"/>');

document.getElementById('chart').innerHTML = parts.join('');
```
